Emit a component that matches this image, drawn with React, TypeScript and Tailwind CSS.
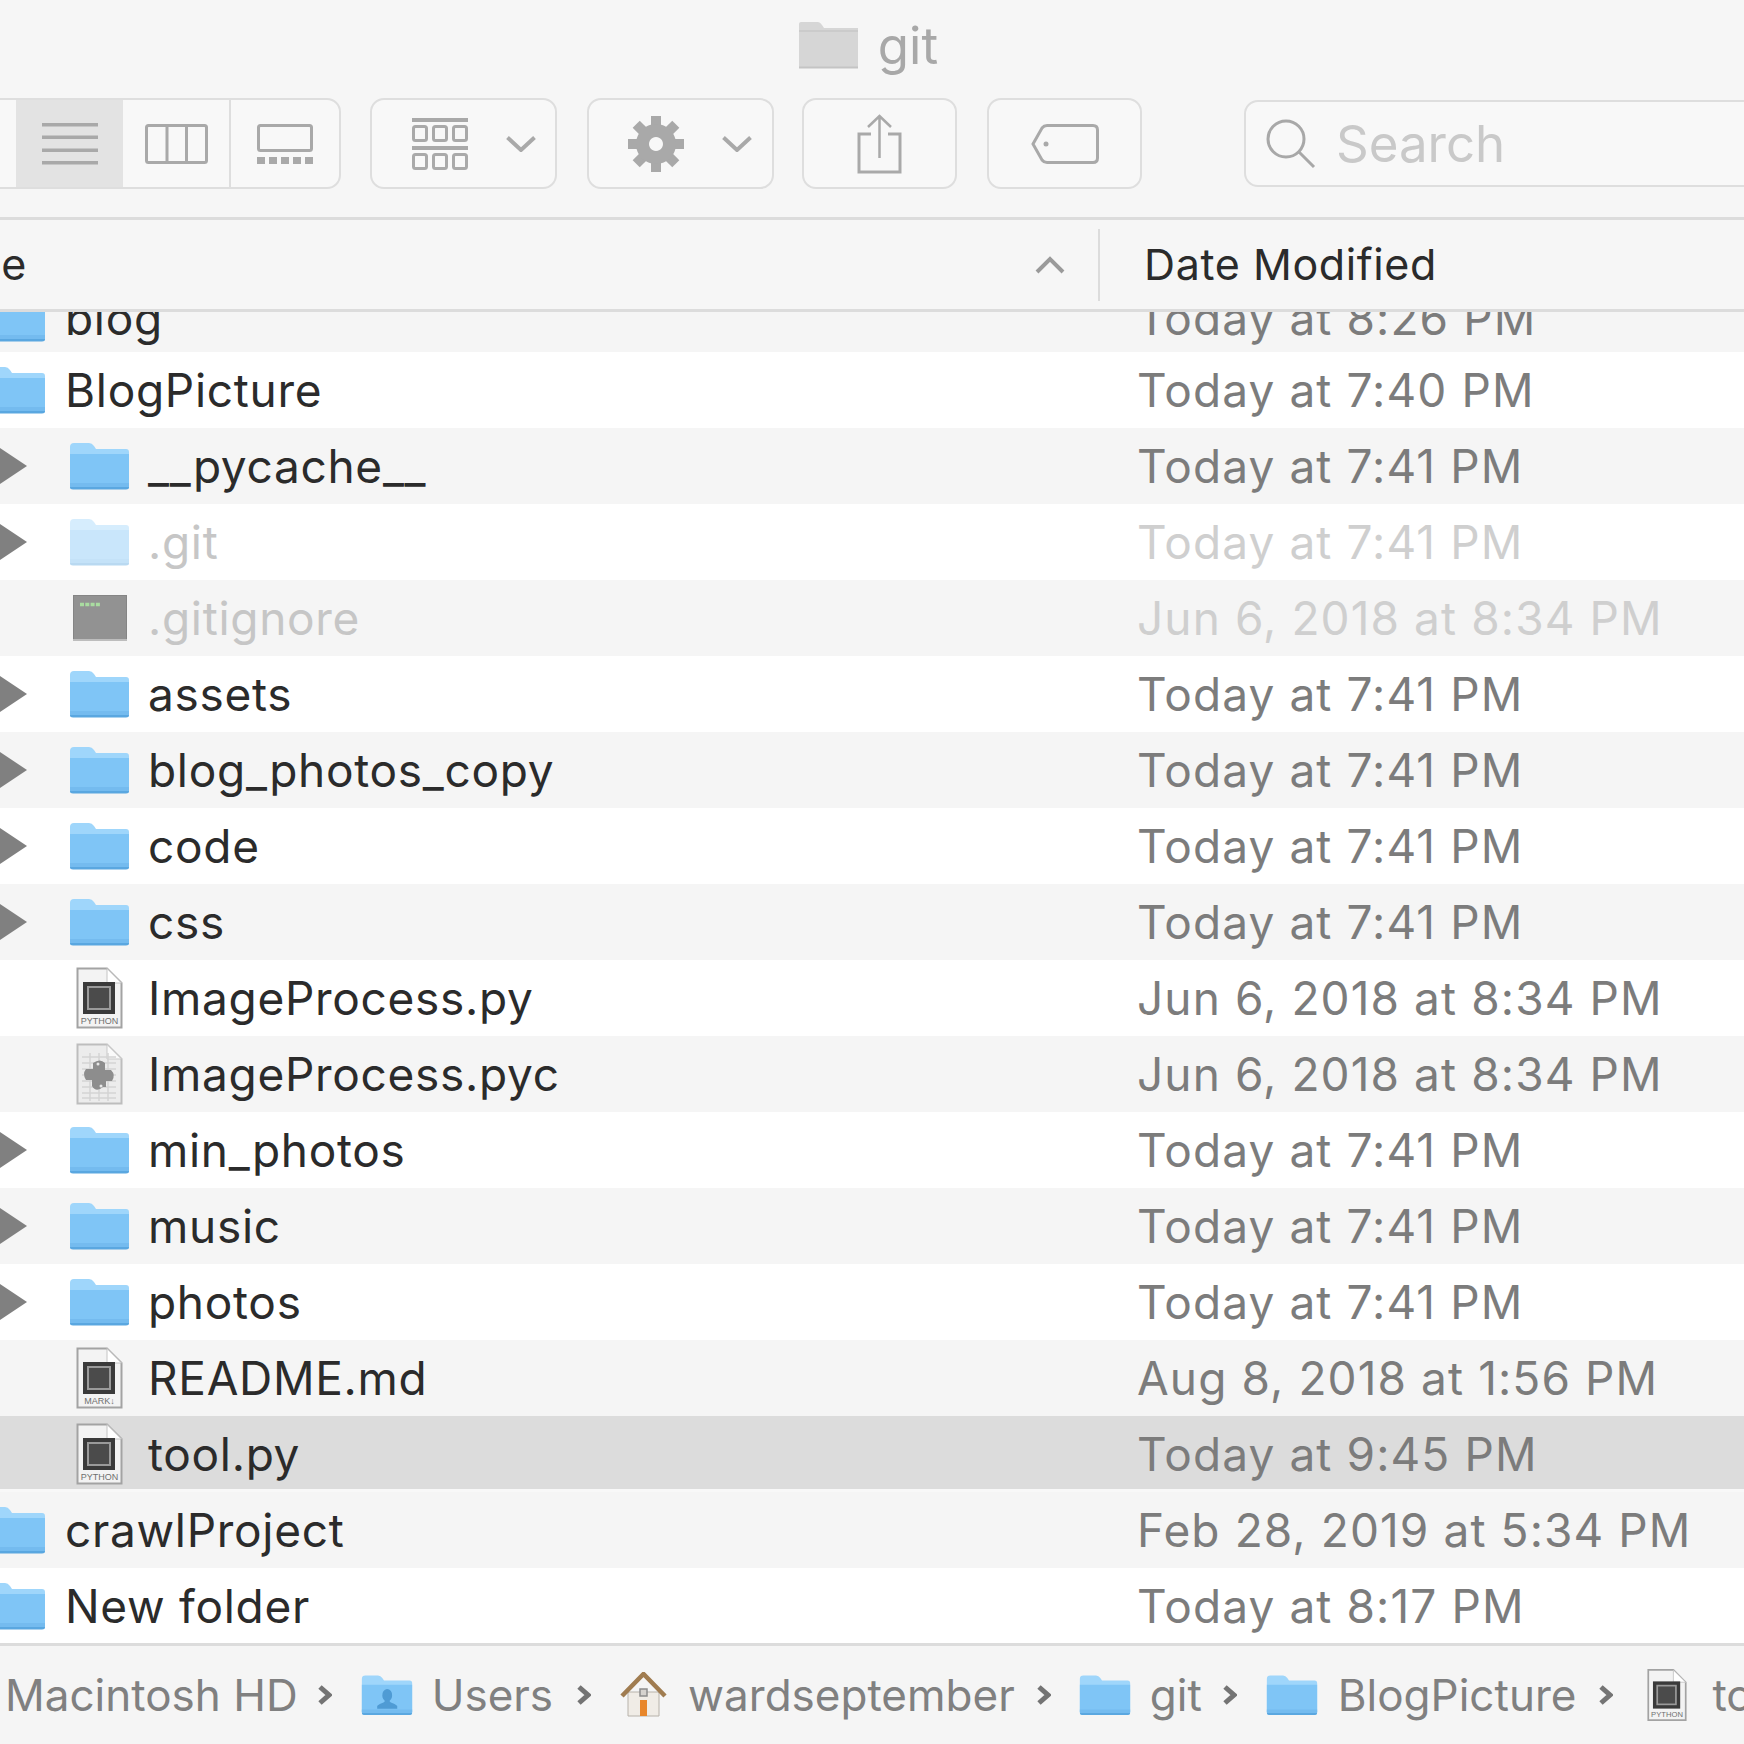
import React from "react";

const ICON = "#a9a9a9";

function Folder({ className, dim, person }: { className?: string; dim?: boolean; person?: boolean }) {
  return (
    <svg viewBox="0 0 61 48" className={className} opacity={dim ? 0.42 : 1}>
      <path d="M1 5 Q1 1 5 1 H20 Q23 1 25 4 L27 7 H57 Q60 7 60 10 V44 Q60 47 57 47 H4 Q1 47 1 44 Z" fill="#9fd6fb" />
      <path d="M1 12 H60 V44 Q60 47 57 47 H4 Q1 47 1 44 Z" fill="#7fc5f6" />
      <path d="M1 41 H60 V44 Q60 47 57 47 H4 Q1 47 1 44 Z" fill="#74bbef" />
      <path d="M1 45 H60 Q60 47.5 57 47.5 H4 Q1 47.5 1 45 Z" fill="#5aa7e0" />
      {person && <path d="M30.5 17 a6 7 0 0 1 6 8 c0 3 -2 5 -3 6 c0 2 7 3 9 6 v3 H19 v-3 c2 -3 9 -4 9 -6 c-1 -1 -3 -3 -3 -6 a6 7 0 0 1 5.500 -8 Z" fill="#4f9bd4" />}
    </svg>
  );
}

function GrayFolder() {
  return (
    <svg viewBox="0 0 61 48" className="w-[61px] h-[48px] mr-[19px]">
      <path d="M1 3 Q1 1 3 1 H20 Q22 1 24 4 L26 7 H60 V47 H1 Z" fill="#d6d6d6" />
      <path d="M1 9 H60 V11 H1 Z" fill="#cbcbcb" />
      <path d="M1 45.500 H60 V47.500 H1 Z" fill="#c4c4c4" />
    </svg>
  );
}

function Triangle() {
  return (
    <svg viewBox="0 0 28 36" className="w-[28px] h-[36px] shrink-0">
      <path d="M0 0 L27 18 L0 36 Z" fill="#808080" />
    </svg>
  );
}

function PyFile({ label = "PYTHON", className = "w-[47px] h-[62px]" }: { label?: string; className?: string }) {
  return (
    <svg viewBox="0 0 47 62" className={className}>
      <path d="M1.500 1.500 H31 L45.500 16 V60.500 H1.500 Z" fill="#f3f3f3" stroke="#a3a3a3" strokeWidth="2" />
      <path d="M31 1.500 V16 H45.500 Z" fill="#ffffff" stroke="#c4c4c4" strokeWidth="1" />
      <rect x="7" y="15" width="32" height="32" fill="#3a3a3a" />
      <rect x="12" y="20" width="22" height="22" fill="#4b4b4b" stroke="#9a9a9a" strokeWidth="2" />
      <text x="23.500" y="57" textAnchor="middle" fontSize="9" fontFamily="Liberation Sans, sans-serif" fill="#6f6f6f">{label}</text>
    </svg>
  );
}

function PycFile() {
  return (
    <svg viewBox="0 0 47 62" className="w-[47px] h-[62px]">
      <path d="M1.500 1.500 H31 L45.500 16 V60.500 H1.500 Z" fill="#ececec" stroke="#bdbdbd" strokeWidth="2" />
      <path d="M31 1.500 V16 H45.500 Z" fill="#fafafa" stroke="#c9c9c9" strokeWidth="1" />
      <path d="M6 14 H40 M6 20 H40 M6 26 H40 M6 32 H40 M6 38 H40 M6 44 H40 M6 50 H40 M6 55 H40 M14 10 V58 M23 10 V58 M32 10 V58" stroke="#d4d4d4" strokeWidth="1.500" />
      <path d="M17 20 Q24 15 29 20 V27 H35 Q40 32 36 38 H30 V44 H27 Q20 50 16 43 V37 H10 Q6 31 10 26 H17 Z" fill="#8d8d8d" />
      <circle cx="22" cy="21" r="1.500" fill="#e8e8e8" />
      <circle cx="25" cy="43" r="1.500" fill="#e8e8e8" />
    </svg>
  );
}

function Terminal() {
  return (
    <svg viewBox="0 0 54 46" className="w-[54px] h-[46px]">
      <rect x="0.500" y="0.500" width="53" height="44.500" fill="#929292" stroke="#858585" />
      <rect x="0" y="44" width="54" height="2" fill="#bdbdbd" />
      <path d="M7 9.500 H27" stroke="#a9dca0" strokeWidth="3.500" strokeDasharray="4 1.300" />
    </svg>
  );
}

function Home() {
  return (
    <svg viewBox="0 0 47 46" className="w-[47px] h-[46px] shrink-0">
      <path d="M8 20 H39 V44 H8 Z" fill="#f0ece6" stroke="#b7b2aa" strokeWidth="1" />
      <path d="M2 24 L23.500 2 L45 24" fill="none" stroke="#a07c50" strokeWidth="4.500" />
      <rect x="20" y="17" width="7" height="7" fill="#d5d2ce" stroke="#8c8c8c" strokeWidth="1.500" />
      <rect x="20" y="28" width="7" height="16" fill="#e8862a" />
    </svg>
  );
}

function Chevron() {
  return (
    <svg viewBox="0 0 30 16" className="w-[30px] h-[16px] shrink-0" fill="none" stroke={ICON} strokeWidth="4">
      <path d="M1.500 1.500 L15 14 L28.500 1.500" />
    </svg>
  );
}

function PathChevron({ className }: { className: string }) {
  return (
    <svg viewBox="0 0 14 20" className={`w-[14px] h-[20px] shrink-0 ${className}`} fill="none" stroke="#747474" strokeWidth="5">
      <path d="M2 2 L11 10 L2 18" />
    </svg>
  );
}

function ListIcon() {
  return (
    <svg viewBox="0 0 56 42" className="w-[56px] h-[42px]" fill={ICON}>
      <rect y="0" width="56" height="3.500" />
      <rect y="12.500" width="56" height="3.500" />
      <rect y="25.500" width="56" height="3.500" />
      <rect y="38" width="56" height="3.500" />
    </svg>
  );
}

function ColumnIcon() {
  return (
    <svg viewBox="0 0 63 40" className="w-[63px] h-[40px]" fill="none" stroke={ICON} strokeWidth="3">
      <rect x="1.500" y="1.500" width="60" height="37" rx="2" />
      <path d="M22 1.500 V38.500 M41.500 1.500 V38.500" />
    </svg>
  );
}

function GalleryIcon() {
  return (
    <svg viewBox="0 0 56 40" className="w-[56px] h-[40px]" fill="none">
      <rect x="1.500" y="1.500" width="53" height="25" rx="2" stroke={ICON} strokeWidth="3" />
      <path d="M0 36.500 H56" stroke={ICON} strokeWidth="7" strokeDasharray="8 4" />
    </svg>
  );
}

function GroupIcon() {
  const boxes = [0, 20, 40];
  return (
    <svg viewBox="0 0 56 52" className="w-[56px] h-[52px] shrink-0" fill="none" stroke={ICON} strokeWidth="3">
      <path d="M0 2 H56 M0 30 H56" strokeWidth="4" />
      {boxes.map((x) => (
        <React.Fragment key={x}>
          <rect x={x + 1.5} y="8.500" width="13" height="14" rx="2" />
          <rect x={x + 1.5} y="36.500" width="13" height="14" rx="2" />
        </React.Fragment>
      ))}
    </svg>
  );
}

function GearIcon() {
  const teeth = [0, 45, 90, 135, 180, 225, 270, 315];
  return (
    <svg viewBox="0 0 56 56" className="w-[56px] h-[56px] shrink-0" fill={ICON}>
      {teeth.map((a) => (
        <rect key={a} x="23" y="0" width="10" height="14" transform={`rotate(${a} 28 28)`} />
      ))}
      <path fillRule="evenodd" d="M28 8 a20 20 0 1 0 0.010 0 Z M28 21 a7 7 0 1 1 -0.010 0 Z" />
    </svg>
  );
}

function ShareIcon() {
  return (
    <svg viewBox="0 0 45 60" className="w-[45px] h-[60px]" fill="none" stroke={ICON} strokeWidth="3">
      <path d="M14 20 H2 V58 H43 V20 H31" />
      <path d="M22.500 44 V2 M11 13 L22.500 2 L34 13" strokeWidth="2.500" />
    </svg>
  );
}

function TagIcon() {
  return (
    <svg viewBox="0 0 68 40" className="w-[68px] h-[40px]" fill="none" stroke={ICON} strokeWidth="3">
      <path d="M16 1.500 H62 Q66.500 1.500 66.500 6 V34 Q66.500 38.500 62 38.500 H16 Q13 38.500 11 36 L2 20 L11 4 Q13 1.500 16 1.500 Z" />
      <circle cx="15" cy="20" r="2.500" fill={ICON} stroke="none" />
    </svg>
  );
}

function SearchIcon() {
  return (
    <svg viewBox="0 0 50 50" className="w-[50px] h-[50px] shrink-0" fill="none" stroke="#a8a8a8" strokeWidth="3">
      <circle cx="20" cy="20" r="18" />
      <path d="M33 33 L48 48" />
    </svg>
  );
}

type RowData = {
  name: string;
  date: string;
  level: number;
  kind: "folder" | "py" | "pyc" | "md" | "term";
  dim?: boolean;
  selected?: boolean;
};

const rows: RowData[] = [
  { name: "blog", date: "Today at 8:26 PM", level: 0, kind: "folder" },
  { name: "BlogPicture", date: "Today at 7:40 PM", level: 0, kind: "folder" },
  { name: "__pycache__", date: "Today at 7:41 PM", level: 1, kind: "folder" },
  { name: ".git", date: "Today at 7:41 PM", level: 1, kind: "folder", dim: true },
  { name: ".gitignore", date: "Jun 6, 2018 at 8:34 PM", level: 1, kind: "term", dim: true },
  { name: "assets", date: "Today at 7:41 PM", level: 1, kind: "folder" },
  { name: "blog_photos_copy", date: "Today at 7:41 PM", level: 1, kind: "folder" },
  { name: "code", date: "Today at 7:41 PM", level: 1, kind: "folder" },
  { name: "css", date: "Today at 7:41 PM", level: 1, kind: "folder" },
  { name: "ImageProcess.py", date: "Jun 6, 2018 at 8:34 PM", level: 1, kind: "py" },
  { name: "ImageProcess.pyc", date: "Jun 6, 2018 at 8:34 PM", level: 1, kind: "pyc" },
  { name: "min_photos", date: "Today at 7:41 PM", level: 1, kind: "folder" },
  { name: "music", date: "Today at 7:41 PM", level: 1, kind: "folder" },
  { name: "photos", date: "Today at 7:41 PM", level: 1, kind: "folder" },
  { name: "README.md", date: "Aug 8, 2018 at 1:56 PM", level: 1, kind: "md" },
  { name: "tool.py", date: "Today at 9:45 PM", level: 1, kind: "py", selected: true },
  { name: "crawlProject", date: "Feb 28, 2019 at 5:34 PM", level: 0, kind: "folder" },
  { name: "New folder", date: "Today at 8:17 PM", level: 0, kind: "folder" },
];

function RowIcon({ row }: { row: RowData }) {
  if (row.kind === "folder") return <Folder className="w-[61px] h-[48px]" dim={row.dim} />;
  if (row.kind === "py") return <PyFile />;
  if (row.kind === "md") return <PyFile label="MARK↓" />;
  if (row.kind === "pyc") return <PycFile />;
  return <Terminal />;
}

function Row({ row, index }: { row: RowData; index: number }) {
  const bg = row.selected
    ? "bg-[#dcdcdc] border-b-[3px] border-[#f8f8f8] pt-[3px]"
    : index === 0
      ? "bg-[#f5f5f5] pt-[7px]"
      : index % 2 === 0
        ? "bg-[#f5f5f5]"
        : "bg-white";
  return (
    <div className={`h-[76px] shrink-0 flex items-center ${bg}`}>
      <div className="w-[1137px] shrink-0 flex items-center">
        {row.level === 0 ? (
          <div className="-ml-[15px] mr-[19px] w-[61px] flex justify-center">
            <RowIcon row={row} />
          </div>
        ) : (
          <>
            <div className="w-[27px] shrink-0 flex items-center">
              {row.kind === "folder" && <Triangle />}
            </div>
            <div className="ml-[42px] mr-[18px] w-[61px] flex justify-center">
              <RowIcon row={row} />
            </div>
          </>
        )}
        <span className={`text-[46px] leading-none tracking-[0.7px] ${row.dim ? "text-[#c6c6c6]" : "text-[#2b2b2b]"}`}>
          {row.name}
        </span>
      </div>
      <span className={`text-[46px] leading-none tracking-[1.1px] whitespace-nowrap ${row.dim ? "text-[#cfcfcf]" : "text-[#7c7c7c]"}`}>
        {row.date}
      </span>
    </div>
  );
}

const btn = "h-[91px] shrink-0 border-2 border-[#dedede] rounded-[14px] bg-[#f8f8f8] flex items-center";

export default function App() {
  return (
    <div className="w-[1744px] h-[1744px] overflow-hidden flex flex-col bg-[#f6f6f6] font-['Inter',sans-serif]">
      <div className="h-[98px] shrink-0 flex items-center justify-center pb-[8px] pr-[8px]">
        <GrayFolder />
        <span className="text-[51px] leading-none text-[#a8a8a8]">git</span>
      </div>

      <div className="h-[122px] shrink-0 flex items-start border-b-[3px] border-[#dcdcdc]">
        <div className={`${btn} -ml-[60px] w-[401px] overflow-hidden`}>
          <div className="w-[74px] h-full shrink-0" />
          <div className="w-[107px] h-full shrink-0 bg-[#e3e3e3] flex items-center justify-center">
            <ListIcon />
          </div>
          <div className="w-[106px] h-full shrink-0 flex items-center justify-center">
            <ColumnIcon />
          </div>
          <div className="flex-1 h-full border-l-2 border-[#dedede] flex items-center justify-center">
            <GalleryIcon />
          </div>
        </div>
        <div className={`${btn} ml-[29px] w-[187px] pl-[40px] gap-[38px]`}>
          <GroupIcon />
          <Chevron />
        </div>
        <div className={`${btn} ml-[30px] w-[187px] pl-[39px] gap-[38px]`}>
          <GearIcon />
          <Chevron />
        </div>
        <div className={`${btn} ml-[28px] w-[155px] justify-center`}>
          <ShareIcon />
        </div>
        <div className={`${btn} ml-[30px] w-[155px] justify-center`}>
          <TagIcon />
        </div>
        <div className="ml-[102px] mt-[2px] h-[87px] w-[560px] shrink-0 border-2 border-[#dedede] rounded-[14px] bg-[#f8f8f8] flex items-center pl-[20px] gap-[20px]">
          <SearchIcon />
          <span className="text-[51px] leading-none text-[#c9c9c9]">Search</span>
        </div>
      </div>

      <div className="h-[92px] shrink-0 flex items-center border-b-[3px] border-[#dcdcdc]">
        <div className="w-[1098px] shrink-0 flex items-center justify-between pr-[33px]">
          <span className="-ml-[93px] text-[43px] leading-none text-[#2b2b2b]">Name</span>
          <svg viewBox="0 0 30 18" className="w-[30px] h-[18px]" fill="none" stroke="#9a9a9a" strokeWidth="4">
            <path d="M2 16 L15 3 L28 16" />
          </svg>
        </div>
        <div className="w-[2px] h-[72px] bg-[#dcdcdc] shrink-0" />
        <span className="ml-[44px] text-[43px] leading-none text-[#2b2b2b] tracking-[0.6px]">Date Modified</span>
      </div>

      <div className="h-[1334px] shrink-0 overflow-hidden border-b-[3px] border-[#dcdcdc] bg-white">
        <div className="-mt-[36px] flex flex-col">
          {rows.map((r, i) => (
            <Row key={r.name} row={r} index={i} />
          ))}
        </div>
      </div>

      <div className="flex-1 flex items-center bg-[#f5f5f5] whitespace-nowrap text-[44px] leading-none text-[#808080] pl-[5px]">
        <span>Macintosh HD</span>
        <PathChevron className="ml-[20px] mr-[29px]" />
        <Folder className="w-[52px] h-[44px] shrink-0" person />
        <span className="ml-[19px]">Users</span>
        <PathChevron className="ml-[24px] mr-[29px]" />
        <Home />
        <span className="ml-[21px]">wardseptember</span>
        <PathChevron className="ml-[22px] mr-[28px]" />
        <Folder className="w-[52px] h-[44px] shrink-0" />
        <span className="ml-[19px]">git</span>
        <PathChevron className="ml-[21px] mr-[29px]" />
        <Folder className="w-[52px] h-[44px] shrink-0" />
        <span className="ml-[20px]">BlogPicture</span>
        <PathChevron className="ml-[23px] mr-[34px]" />
        <PyFile className="w-[40px] h-[54px] shrink-0" />
        <span className="ml-[25px]">tool.py</span>
      </div>
    </div>
  );
}
